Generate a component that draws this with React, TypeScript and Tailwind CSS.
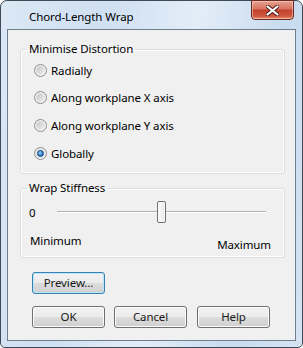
const FONT = "font-['Segoe_UI','Noto_Sans',sans-serif] tracking-[-0.1px]";

function Radio({ label, checked = false, className = "" }: { label: string; checked?: boolean; className?: string }) {
  return (
    <label className={`flex h-[14px] items-center gap-[4px] pl-[13px] ${className}`}>
      <span className="flex h-[13px] w-[13px] items-center justify-center rounded-full border border-[#8f8f8f] bg-[linear-gradient(135deg,#d0d0d0,#f4f4f4)] shadow-[inset_0_0_0_1px_#f2f2f2]">
        {checked ? (
          <span className="h-[7px] w-[7px] rounded-full border border-[#1c4f87] bg-[radial-gradient(circle_at_40%_35%,#9ad2ff,#2a79c8_60%,#144d8a)]" />
        ) : (
          <span className="h-[7px] w-[7px] rounded-full bg-[linear-gradient(135deg,#c8c8c8,#ececec)]" />
        )}
      </span>
      <span className="text-[11.5px] leading-[15px] text-black">{label}</span>
    </label>
  );
}

function Button({ children, primary = false, className = "" }: { children: React.ReactNode; primary?: boolean; className?: string }) {
  return (
    <button
      className={`h-[22px] w-[73px] rounded-[3px] border text-[11.5px] leading-[15px] text-[#1a1a1a] bg-[linear-gradient(#f2f2f2,#ebebeb_50%,#dddddd_50%,#cfcfcf)] ${
        primary
          ? "border-[#3c7fb1] shadow-[inset_0_0_0_1px_#b6e4f8]"
          : "border-[#707070] shadow-[inset_0_0_0_1px_#fbfbfb]"
      } ${className}`}
    >
      {children}
    </button>
  );
}

export default function App() {
  return (
    <div className={`${FONT} h-[348px] w-[303px] overflow-hidden`}>
      <div className="flex h-full w-full flex-col rounded-t-[7px] rounded-b-[5px] border border-[#3f4a56] bg-[linear-gradient(100deg,#dbe7f4_0%,#cfe0f2_30%,#e3edf8_55%,#c8dbef_80%,#d6e4f3_100%)]">
        {/* title bar */}
        <div className="flex h-[28px] shrink-0 items-start justify-between">
          <span className="mt-[8px] pl-[28px] text-[11.5px] leading-[15px] text-black">Chord-Length Wrap</span>
          <div className="-mt-px mr-[8px] flex h-[20px] w-[43px] items-center justify-center rounded-b-[4px] border border-[#6a2a22] bg-[linear-gradient(#e8a293,#d7715d_45%,#c2402b_50%,#d05a40_85%,#e99a7e)] shadow-[inset_0_0_0_1px_rgba(255,220,210,0.5)]">
            <svg width="13" height="11" viewBox="0 0 13 11">
              <path
                d="M1.5 1.5 L11.5 9.5 M11.5 1.5 L1.5 9.5"
                stroke="#4a1a14"
                strokeWidth="4"
                strokeLinecap="round"
              />
              <path
                d="M1.5 1.5 L11.5 9.5 M11.5 1.5 L1.5 9.5"
                stroke="#ffffff"
                strokeWidth="2.2"
                strokeLinecap="round"
              />
            </svg>
          </div>
        </div>

        {/* client area */}
        <div className="mx-[6px] mb-[6px] flex flex-1 flex-col border border-[#6f7e8f] bg-[#f0f0f0]">
          <fieldset className="ml-[12px] mr-[10px] mt-[11px] rounded-[3px] border border-[#d5dfe5] px-0 pb-[13px] shadow-[inset_0_0_0_1px_#ffffff]">
            <legend className="ml-[6px] px-[2px] text-[11.5px] leading-[16px] text-black">Minimise Distortion</legend>
            <div className="flex flex-col">
              <Radio label="Radially" className="mt-[6px]" />
              <Radio label="Along workplane X axis" className="mt-[13px]" />
              <Radio label="Along workplane Y axis" className="mt-[14px]" />
              <Radio label="Globally" checked className="mt-[14px]" />
            </div>
          </fieldset>

          <fieldset className="ml-[12px] mr-[10px] mt-[6px] rounded-[3px] border border-[#d5dfe5] px-0 pb-[5px] shadow-[inset_0_0_0_1px_#ffffff]">
            <legend className="ml-[6px] px-[2px] text-[11.5px] leading-[16px] text-black">Wrap Stiffness</legend>
            <div className="mt-[5px] flex h-[22px] items-center pl-[8px]">
              <span className="w-[28px] text-[11.5px] leading-[15px] text-black">0</span>
              <div className="relative h-[22px] w-[209px]">
                <div className="absolute left-0 right-0 top-[10px] h-[2px] border-t border-[#b1b1b1] bg-white" />
                <div className="absolute left-[100px] top-0 h-[22px] w-[9px] rounded-[2px] border border-[#707070] bg-[linear-gradient(90deg,#ffffff,#e6e6e6)] shadow-[inset_0_0_0_1px_#fbfbfb]" />
              </div>
            </div>
            <div className="mt-[10px] flex items-start justify-between pl-[9px] pr-[13px]">
              <span className="text-[11.5px] leading-[15px] text-black">Minimum</span>
              <span className="mt-[4px] text-[11.5px] leading-[15px] text-black">Maximum</span>
            </div>
          </fieldset>

          <div className="ml-[24px] mt-[11px]">
            <Button primary>Preview...</Button>
          </div>

          <div className="ml-[24px] mt-[12px] flex gap-[9px]">
            <Button>OK</Button>
            <Button>Cancel</Button>
            <Button className="ml-px">Help</Button>
          </div>
        </div>
      </div>
    </div>
  );
}
